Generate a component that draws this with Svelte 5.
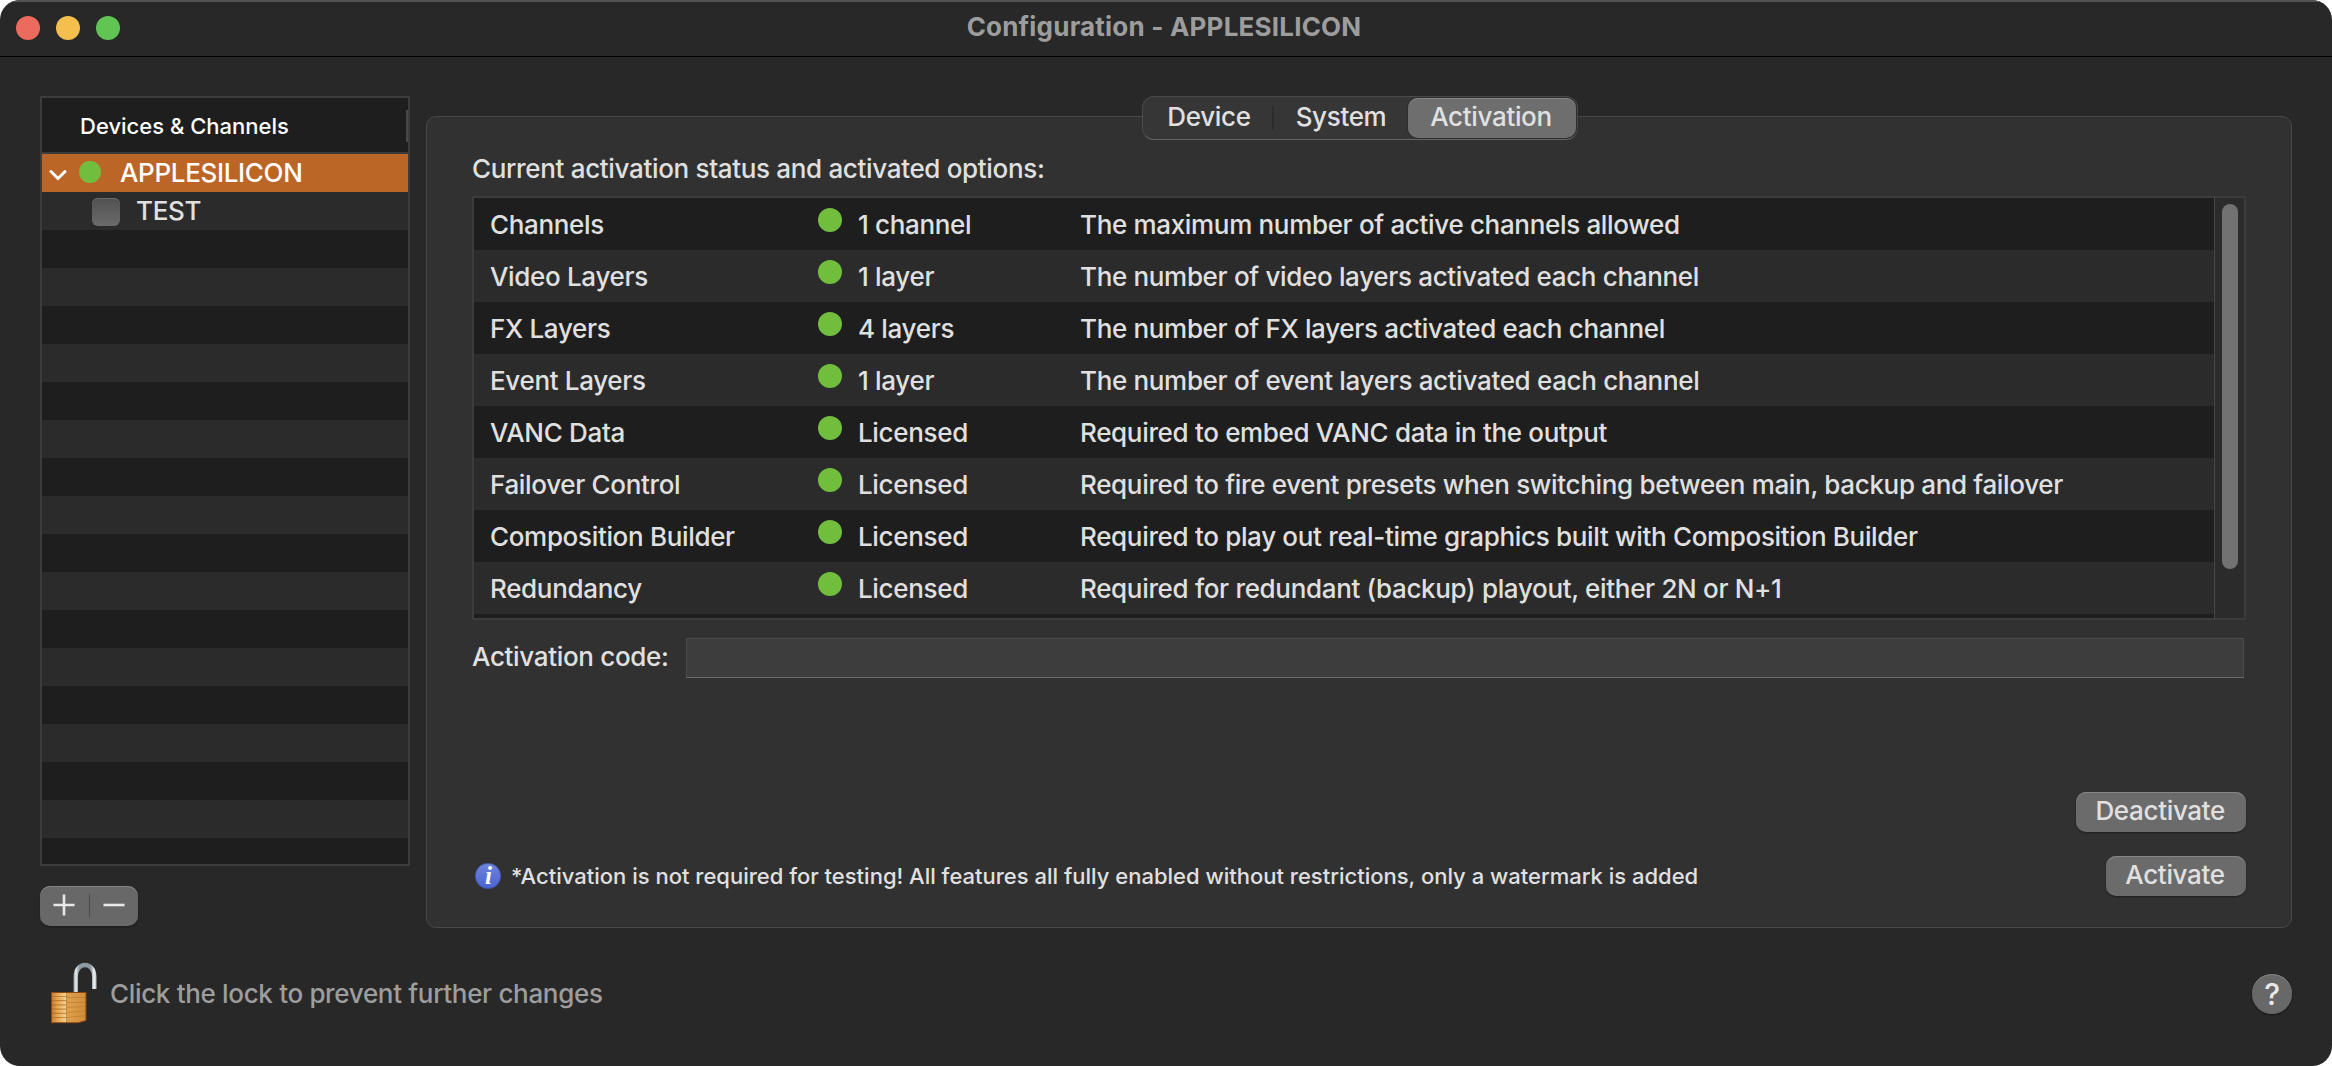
<script>
    let tabs = ['Device', 'System', 'Activation'];
    let active = $state('Activation');
    let code = $state('');

    let options = [
        {name: 'Channels', status: '1 channel', info: 'The maximum number of active channels allowed'},
        {name: 'Video Layers', status: '1 layer', info: 'The number of video layers activated each channel'},
        {name: 'FX Layers', status: '4 layers', info: 'The number of FX layers activated each channel'},
        {name: 'Event Layers', status: '1 layer', info: 'The number of event layers activated each channel'},
        {name: 'VANC Data', status: 'Licensed', info: 'Required to embed VANC data in the output'},
        {name: 'Failover Control', status: 'Licensed', info: 'Required to fire event presets when switching between main, backup and failover'},
        {name: 'Composition Builder', status: 'Licensed', info: 'Required to play out real-time graphics built with Composition Builder'},
        {name: 'Redundancy', status: 'Licensed', info: 'Required for redundant (backup) playout, either 2N or N+1'}
    ];
</script>

<div class="window">
    <header class="titlebar">
        <div class="lights">
            <i class="close"></i>
            <i class="minimize"></i>
            <i class="zoom"></i>
        </div>
        <h1>Configuration - APPLESILICON</h1>
    </header>

    <div class="content">
        <aside>
            <div class="tree">
                <div class="tree-head"><span>Devices &amp; Channels</span><i></i></div>
                <div class="device">
                    <svg class="chevron" width="18" height="12" viewBox="0 0 18 12">
                        <path d="M2 2.5 L9 9.5 L16 2.5" />
                    </svg>
                    <i class="dot small"></i>
                    <span>APPLESILICON</span>
                </div>
                <div class="channel">
                    <i class="check"></i>
                    <span>TEST</span>
                </div>
                <div class="stripes"></div>
            </div>

            <div class="plusminus">
                <button aria-label="Add">
                    <svg width="22" height="22" viewBox="0 0 22 22"><path d="M11 0.5 V21.5 M0.5 11 H21.5" /></svg>
                </button>
                <hr />
                <button aria-label="Remove">
                    <svg width="22" height="22" viewBox="0 0 22 22"><path d="M0.5 11 H21.5" /></svg>
                </button>
            </div>
        </aside>

        <main>
            <nav>
                {#each tabs as tab}
                <button class:active={tab == active} onclick={() => active = tab}>{tab}</button>
                {/each}
            </nav>

            <p class="caption">Current activation status and activated options:</p>

            <div class="table">
                <div class="rows">
                    {#each options as option}
                    <div class="row">
                        <span class="name">{option.name}</span>
                        <i class="dot"></i>
                        <span class="status">{option.status}</span>
                        <span>{option.info}</span>
                    </div>
                    {/each}
                </div>
                <div class="scroll"><i></i></div>
            </div>

            <div class="code">
                <label for="code">Activation code:</label>
                <input id="code" type="text" bind:value={code} />
            </div>

            <div class="actions">
                <button class="push">Deactivate</button>
            </div>
            <div class="actions">
                <p class="note">
                    <svg width="28" height="28" viewBox="0 0 28 28">
                        <defs>
                            <linearGradient id="info" x1="0" y1="0" x2="0" y2="1">
                                <stop offset="0" stop-color="#6f84de" />
                                <stop offset="1" stop-color="#4a63cf" />
                            </linearGradient>
                        </defs>
                        <circle cx="14" cy="14" r="12.7" fill="url(#info)" stroke="#3c4f9f" stroke-width="0.8" />
                        <text x="14.4" y="22" text-anchor="middle">i</text>
                    </svg>
                    <span>*Activation is not required for testing! All features all fully enabled without restrictions, only a watermark is added</span>
                </p>
                <button class="push">Activate</button>
            </div>
        </main>
    </div>

    <footer>
        <svg class="lock" width="50" height="64" viewBox="0 0 50 64">
            <defs>
                <linearGradient id="front" x1="0" y1="0" x2="1" y2="0">
                    <stop offset="0" stop-color="#c47f30" />
                    <stop offset="0.4" stop-color="#e6a650" />
                    <stop offset="1" stop-color="#f7d592" />
                </linearGradient>
                <linearGradient id="side" x1="0" y1="0" x2="1" y2="0">
                    <stop offset="0" stop-color="#dfa24d" />
                    <stop offset="1" stop-color="#d08c3a" />
                </linearGradient>
                <linearGradient id="steel" gradientUnits="userSpaceOnUse" x1="23" y1="0" x2="47" y2="0">
                    <stop offset="0" stop-color="#75828a" />
                    <stop offset="0.12" stop-color="#e9eff2" />
                    <stop offset="0.25" stop-color="#8d9aa1" />
                    <stop offset="0.75" stop-color="#8d9aa1" />
                    <stop offset="0.88" stop-color="#f2f6f8" />
                    <stop offset="1" stop-color="#9fabb1" />
                </linearGradient>
            </defs>
            <path d="M25.7 31 V15 C25.7 -1 44.3 -1 44.3 15 V27" fill="none" stroke="url(#steel)" stroke-width="4.4" />
            <path d="M1.5 30 H16.5 V61 H1.5 Z" fill="url(#front)" />
            <path d="M16.5 30 H36 V58.5 L28 61 H16.5 Z" fill="url(#side)" />
            <path d="M1.5 34.5 H16.5 M1.5 38.7 H16.5 M1.5 42.9 H16.5 M1.5 47.1 H16.5 M1.5 51.3 H16.5 M1.5 55.5 H16.5" stroke="#a8621d" stroke-opacity="0.6" stroke-width="1.2" />
            <path d="M16.5 35.5 H36 M16.5 40.5 H36 M16.5 45.5 L36 44.5 M16.5 50.5 L36 49 M16.5 55.5 L36 53.5" stroke="#b87428" stroke-opacity="0.5" />
            <path d="M1.5 30.5 H36 V58.5 L28 60.7 H1.5 Z" fill="none" stroke="#8a4712" stroke-width="1" />
        </svg>
        <span>Click the lock to prevent further changes</span>
        <button class="help" aria-label="Help">?</button>
    </footer>
</div>

<style>
:global(body) {
    background: #fff;
}

.window {
    height: 1066px;
    box-sizing: border-box;
    display: flex;
    flex-direction: column;
    overflow: hidden;
    border-radius: 20px;
    background: #282828;
    color: #e0e0e0;
    font: 450 26px/32px Inter, "Liberation Sans", sans-serif;
    letter-spacing: -0.33px;
}

button, input {
    font: inherit;
    letter-spacing: inherit;
    color: inherit;
    border: 0;
    padding: 0;
    margin: 0;
    box-sizing: border-box;
}

p, h1 {
    margin: 0;
}

.titlebar {
    display: grid;
    grid-template-columns: 200px 1fr 200px;
    align-items: center;
    height: 57px;
    box-sizing: border-box;
    padding-bottom: 2px;
    border-top: 2px solid #525252;
    border-bottom: 1px solid #000;
}

h1 {
    padding: 0 4px 2px 0;
    text-align: center;
    font-size: 26px;
    font-weight: 700;
    letter-spacing: 0.2px;
    color: #9d9d9d;
}

.lights {
    display: flex;
    gap: 16px;
    padding-left: 16px;

    i {
        width: 24px;
        height: 24px;
        border-radius: 50%;
    }

    .close { background: #ed6a5f; }
    .minimize { background: #f5bf4f; }
    .zoom { background: #61c554; }
}

.content {
    display: flex;
    gap: 16px;
    padding: 39px 40px 0;
}

aside {
    width: 370px;
    flex: none;
}

.tree {
    height: 770px;
    box-sizing: border-box;
    border: 2px solid #3c3c3c;
    background: #1e1e1e;
    display: flex;
    flex-direction: column;
}

.tree-head {
    display: flex;
    align-items: center;
    justify-content: space-between;
    height: 56px;
    box-sizing: border-box;
    padding: 2px 0 0 38px;
    border-bottom: 2px solid #3c3c3c;
    color: #fff;
    font-size: 22px;
    letter-spacing: 0;

    i {
        width: 2px;
        height: 32px;
        background: #484848;
    }
}

.device, .channel {
    display: flex;
    align-items: center;
    height: 38px;
}

.device {
    background: #bb6626;
    color: #fff;
    padding-left: 7px;
}

.channel {
    background: #2b2b2b;
    padding-left: 50px;
    gap: 16px;
}

.chevron {
    margin-top: 3px;

    path {
        fill: none;
        stroke: #fff;
        stroke-width: 3;
        stroke-linecap: round;
    }
}

.check {
    width: 28px;
    height: 28px;
    margin-top: 2px;
    border-radius: 6px;
    background: linear-gradient(#515151, #6b6b6b);
    box-shadow: inset 0 1px #6a6a6a;
}

.dot {
    width: 24px;
    height: 24px;
    border-radius: 50%;
    background: #71be3e;

    &.small {
        width: 22px;
        height: 22px;
        margin: 0 19px 2px 12px;
    }
}

.stripes {
    flex: 1;
    background: repeating-linear-gradient(#1e1e1e 0 38px, #2b2b2b 38px 76px);
}

.plusminus {
    display: flex;
    align-items: center;
    width: 98px;
    height: 40px;
    box-sizing: border-box;
    padding-bottom: 2px;
    margin-top: 20px;
    border-radius: 10px;
    background: #686868;
    box-shadow: inset 0 1px #838383, 0 1px 2px #0006;

    button {
        flex: 1;
        display: grid;
        place-items: center;
        background: none;
    }

    hr {
        width: 1px;
        height: 24px;
        margin: 2px 0 0;
        border: 0;
        background: #4c4c4c;
    }

    path {
        stroke: #e8e8e8;
        stroke-width: 2.6;
    }
}

main {
    flex: 1;
    height: 812px;
    margin-top: 20px;
    box-sizing: border-box;
    border: 1px solid #484848;
    border-radius: 10px;
    background: #313131;
    padding: 0 45px;
}

nav {
    display: flex;
    width: 436px;
    height: 44px;
    box-sizing: border-box;
    margin: -21px auto 0 670px;
    padding: 1px;
    border: 1px solid #4a4a4a;
    border-bottom-color: #666;
    border-radius: 12px;
    background: #363636;

    button {
        position: relative;
        width: 132px;
        padding: 0 2px 2px 0;
        background: none;
        border-radius: 10px;
    }

    button:first-child::after {
        content: '';
        position: absolute;
        right: 2px;
        top: 8px;
        width: 2px;
        height: 24px;
        background: #2c2c2c;
    }

    .active {
        width: 168px;
        background: #6e6e6e;
        box-shadow: inset 0 1px #868686, 0 0 2px #0008;
    }
}

.caption {
    padding: 13px 0 11px;
}

.table {
    display: flex;
    height: 424px;
    box-sizing: border-box;
    border: 2px solid #3c3c3c;
    background: #1e1e1e;
}

.rows {
    flex: 1;
}

.row {
    display: flex;
    align-items: center;
    height: 52px;
    box-sizing: border-box;
    padding: 2px 0 0 16px;

    &:nth-child(even) {
        background: #2b2b2b;
    }

    .name {
        width: 328px;
    }

    .status {
        width: 222px;
        margin-left: 16px;
    }

    .dot {
        margin-bottom: 10px;
    }
}

.scroll {
    width: 30px;
    border-left: 1px solid #484848;
    box-sizing: border-box;
    background: #2b2b2b;
    padding: 6px 6px 0 7px;

    i {
        display: block;
        height: 365px;
        border-radius: 8px;
        background: #727272;
    }
}

.code {
    display: flex;
    justify-content: space-between;
    align-items: center;
    margin-top: 18px;
    padding-right: 2px;

    label {
        padding-bottom: 2px;
    }

    input {
        width: 1558px;
        height: 40px;
        border: 1px solid #4c4c4c;
        border-bottom-color: #6e6e6e;
        background: #3d3d3d;
    }
}

.actions {
    display: flex;
    justify-content: flex-end;
    align-items: center;
    height: 40px;
    margin-top: 24px;
}

.code + .actions {
    margin-top: 114px;
}

.note {
    display: flex;
    align-items: center;
    gap: 9px;
    flex: 1;
    padding-left: 2px;
    font-size: 22px;
    letter-spacing: 0;

    text {
        font: italic 700 25px "Liberation Serif", serif;
        fill: #fff;
    }
}

.push {
    min-width: 140px;
    height: 40px;
    padding: 0 21px 2px 19px;
    border-radius: 10px;
    background: #6b6b6b;
    box-shadow: inset 0 1px #868686, 0 1px 2px #0006;
}

footer {
    display: flex;
    align-items: center;
    gap: 10px;
    padding: 34px 40px 0 50px;
    color: #9d9d9d;
}

.help {
    width: 40px;
    height: 40px;
    margin-left: auto;
    border-radius: 50%;
    background: #686868;
    box-shadow: inset 0 1px #838383, 0 1px 2px #0006;
    color: #e8e8e8;
    font-size: 30px;
}
</style>
